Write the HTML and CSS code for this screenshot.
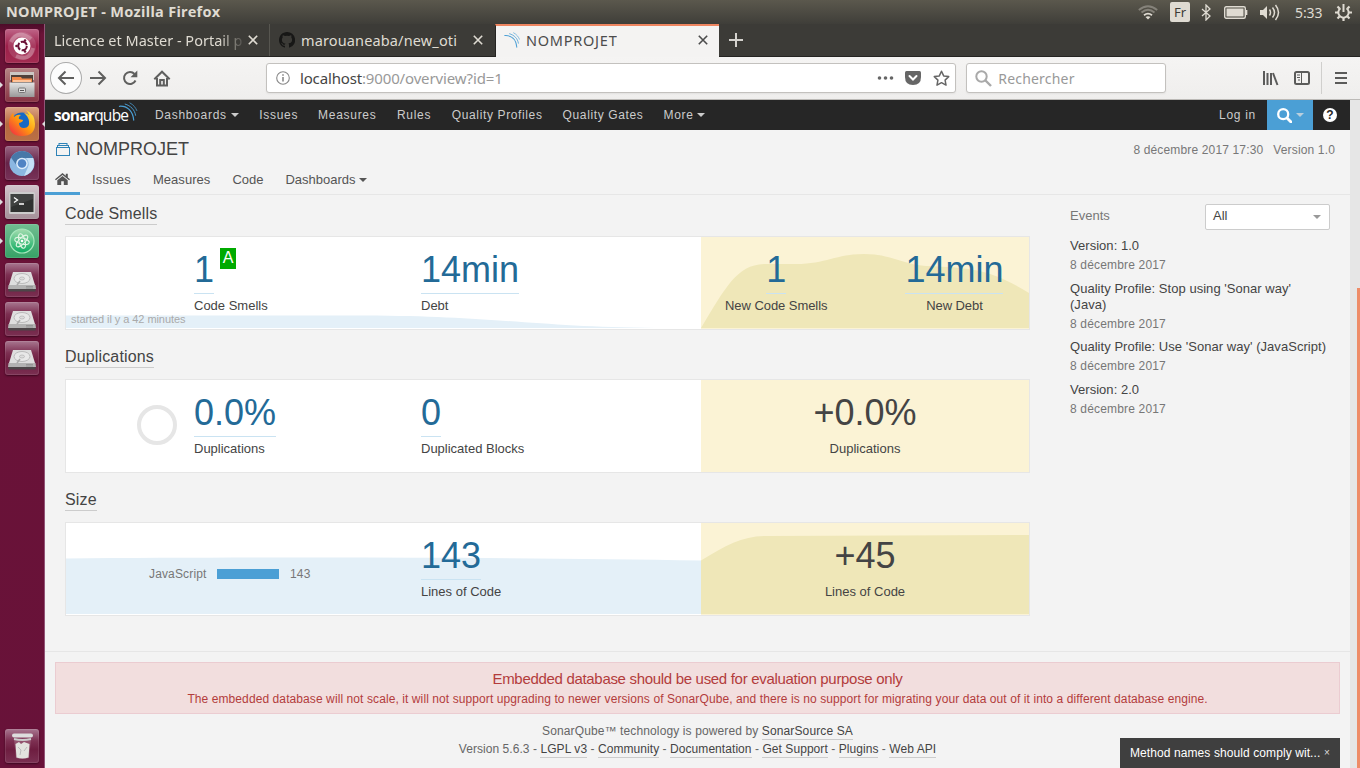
FILE: index.html
```html
<!DOCTYPE html>
<html lang="fr">
<head>
<meta charset="utf-8">
<title>NOMPROJET</title>
<link rel="stylesheet" href="styles.css">
</head>
<body>
<svg width="0" height="0" class="defs">
  <defs>
    <linearGradient id="metal" x1="0" y1="0" x2="0" y2="1"><stop offset="0" stop-color="#e4e4e4"/><stop offset="1" stop-color="#999"/></linearGradient>
    <linearGradient id="flame" x1="1" y1="0" x2="0" y2="1"><stop offset="0" stop-color="#fff04a"/><stop offset=".5" stop-color="#ff980e"/><stop offset="1" stop-color="#f0204a"/></linearGradient>
    <linearGradient id="atomfill" x1="0" y1="0" x2="0" y2="1"><stop offset="0" stop-color="#a5ddb0"/><stop offset="1" stop-color="#0cab60"/></linearGradient>
    <symbol id="disk" viewBox="0 0 34 34">
      <path d="M8 9h18l4 13v4H4v-4z" fill="#dedede"/><path d="M3.500 22h27l.5 4H3z" fill="#b2b2b2"/><path d="M3.500 26h27v2.500h-27z" fill="#4c4548"/>
      <ellipse cx="17" cy="15.500" rx="8" ry="5" fill="#e8e8e8" stroke="#bbb"/><ellipse cx="17" cy="15.500" rx="2.500" ry="1.500" fill="#ddd" stroke="#aaa" stroke-width=".6"/><path d="M12 22l3-4" stroke="#aaa" stroke-width="1.500"/><path d="M21 23.500h7M21 25h7" stroke="#888" stroke-width=".7"/>
    </symbol>
    <symbol id="waves" viewBox="0 0 20 20"><g fill="none" stroke="#4b9fd5" stroke-linecap="round"><path d="M1 4.500C9 4 15 9 16 19" stroke-width="1.300"/><path d="M7 2.200C13 4 17 8 18 14" stroke-width="1"/><path d="M12 1C16 3 18 6 19.300 9" stroke-width=".8"/></g></symbol>
    <symbol id="close" viewBox="0 0 10 10"><path d="M.8.8l8.400 8.400M9.200.8L.8 9.200" fill="none" stroke="currentColor" stroke-width="1.600"/></symbol>
  </defs>
</svg>

<header class="titlebar">
  <span class="window-title">NOMPROJET - Mozilla Firefox</span>
  <div class="indicators">
    <svg class="ind-wifi" width="20" height="15" viewBox="0 0 20 15" fill="none" stroke-width="1.800"><path d="M.8 5Q10-2.500 19.200 5" stroke="#85827a"/><path d="M3.500 7.500Q10 2 16.500 7.500" stroke="#85827a"/><path d="M6 10.300Q10 7 14 10.300" stroke="#dfdbd2"/><path d="M7.500 12L10 14.500 12.500 12Q10 10.500 7.500 12z" fill="#dfdbd2"/></svg>
    <span class="ind-lang">Fr</span>
    <svg class="ind-bt" width="10" height="17" viewBox="0 0 10 17" fill="none" stroke="#dfdbd2" stroke-width="1.300"><path d="M1 5l8 7-4 4V1l4 4-8 7"/></svg>
    <svg class="ind-bat" width="24" height="13" viewBox="0 0 24 13"><rect x=".7" y=".7" width="20.600" height="11.600" rx="1.500" fill="none" stroke="#dfdbd2" stroke-width="1.400"/><rect x="2.500" y="2.500" width="17" height="8" fill="#dfdbd2"/><path d="M22.500 4v5" stroke="#dfdbd2" stroke-width="1.700"/></svg>
    <svg class="ind-vol" width="20" height="17" viewBox="0 0 20 17"><path d="M0 6h3l4-4v13l-4-4H0z" fill="#dfdbd2"/><path d="M9.500 5.500q2 3 0 6M12.500 3.500q4 5 0 10M15.500 1q6 7.500 0 15" fill="none" stroke="#dfdbd2" stroke-width="1.500"/></svg>
    <span class="ind-time">5:33</span>
    <svg class="ind-gear" width="17" height="17" viewBox="0 0 17 17" fill="none" stroke="#dfdbd2"><path d="M5.500 4.200A5.200 5.200 0 1 0 11.500 4.200" stroke-width="2"/><path d="M8.500 0v8" stroke-width="2"/><path d="M0 8.500h3M14 8.500h3M8.500 14v3M2.500 2.500l2 2M14.500 2.500l-2 2M2.500 14.500l2-2M14.500 14.500l-2-2" stroke-width="2.200"/></svg>
  </div>
</header>

<div class="desktop">
  <aside class="launcher">
    <div class="tile ubuntu"><svg viewBox="0 0 34 34"><circle cx="17" cy="17" r="14" fill="#fff" opacity=".12"/><path d="M6 13q7-13 20-3M28 19q-3 14-17 8" stroke="#fff" stroke-opacity=".25" stroke-width="4" fill="none"/><circle cx="17" cy="17" r="8.500" fill="#fff"/><circle cx="17.500" cy="17" r="4.300" fill="none" stroke="#6b1237" stroke-width="2" stroke-dasharray="7.500 1.500"/><g fill="#6b1237"><circle cx="11.500" cy="17" r="1.300"/><circle cx="20" cy="11.500" r="1.300"/><circle cx="20" cy="22.500" r="1.300"/></g></svg></div>
    <div class="tile files running"><svg viewBox="0 0 34 34"><path d="M5 4h24v8H5z" fill="#ccc8c4"/><path d="M6 7h22v8H6z" fill="#50413a"/><path d="M7 9h9l1 1.500h10V14H7z" fill="#f28b4c"/><path d="M8 12h18v2H8z" fill="#ffc49a"/><path d="M4.500 14.500h25V29h-25z" fill="url(#metal)"/><rect x="13.500" y="20" width="7" height="4.500" rx="1" fill="#ddd" stroke="#777"/><path d="M15 22.500h4" stroke="#555"/></svg></div>
    <div class="tile firefox running focused"><svg viewBox="0 0 34 34"><circle cx="17" cy="16.500" r="11" fill="#1769c5"/><path d="M4 16Q4 10 8 6l1 4q3-3 7-2-3 2-2 4l4 1q0 2-4 3 0 5 5 5 6 0 5-7-1-5-5-8 3 0 5 2-1-3-3-5 9 4 9 14 0 12-13 12Q4 29 4 16z" fill="url(#flame)"/></svg></div>
    <div class="tile chromium"><svg viewBox="0 0 34 34"><circle cx="17" cy="17.500" r="12.500" fill="#8bb7e2"/><path d="M6 11.500Q10 5 17 5q8 0 11.200 7H17a5.500 5.500 0 0 0-5 8z" fill="#4778a8"/><path d="M28.200 12Q32 25 19 30l4-9q2-5-2-9z" fill="#c5e0f7"/><circle cx="17" cy="17.500" r="5.800" fill="#dcecfa"/><circle cx="17" cy="17.500" r="4.300" fill="#4f83c4"/></svg></div>
    <div class="tile terminal running"><svg viewBox="0 0 34 34"><rect x="4" y="7" width="26" height="22" rx="1.500" fill="#ccc"/><rect x="5.500" y="9" width="23" height="18" fill="#303231"/><path d="M6 9h22v5L6 22z" fill="#fff" opacity=".08"/><path d="M9 12.500l3.500 2.500L9 17.500M14 19h5" stroke="#fff" stroke-width="1.300" fill="none"/></svg></div>
    <div class="tile atom running"><svg viewBox="0 0 34 34"><circle cx="17" cy="17" r="12" fill="url(#atomfill)" stroke="#a6e8bd" stroke-width="1.200"/><g fill="none" stroke="#dff5e2" stroke-width="1"><ellipse cx="17" cy="17" rx="7.500" ry="3" transform="rotate(15 17 17)"/><ellipse cx="17" cy="17" rx="7.500" ry="3" transform="rotate(75 17 17)"/><ellipse cx="17" cy="17" rx="7.500" ry="3" transform="rotate(135 17 17)"/></g><circle cx="17" cy="17" r="1.300" fill="#fff"/></svg></div>
    <div class="tile"><svg><use href="#disk"/></svg></div>
    <div class="tile"><svg><use href="#disk"/></svg></div>
    <div class="tile"><svg><use href="#disk"/></svg></div>
    <div class="tile trash"><svg viewBox="0 0 34 34"><path d="M9 10h17l-2 19q-7 2-13 0z" fill="#fff" opacity=".18"/><path d="M10.500 15l3.500-2 2 2 3-2 5.500 2-1 13.500q-6 2-12 0z" fill="#e3e3df"/><path d="M13 18l3 3-1 5M22 18l-3 4" stroke="#bbb" fill="none"/><rect x="7" y="4.500" width="21" height="4" rx="2" fill="#ddd"/><path d="M9 10q8.500 2 17 0" stroke="#ccc" stroke-width="2" fill="none"/></svg></div>
  </aside>

  <div class="window">
    <div class="tabs">
      <div class="tab tab-a"><span class="tab-label faded">Licence et Master - Portail p</span><svg class="x"><use href="#close"/></svg></div>
      <div class="tab tab-b"><svg class="fav" viewBox="0 0 16 16"><path fill="#171716" d="M8 0C3.600 0 0 3.600 0 8c0 3.500 2.300 6.500 5.500 7.600.4.100.5-.2.500-.4v-1.500c-2.200.5-2.700-.9-2.700-.9-.4-.9-.9-1.200-.9-1.200-.7-.5.1-.5.1-.5.800.1 1.200.8 1.200.8.700 1.200 1.900.9 2.300.7.100-.5.300-.9.500-1.100-1.800-.2-3.600-.9-3.600-4 0-.9.300-1.600.8-2.100-.1-.2-.4-1 .1-2.100 0 0 .7-.2 2.200.8a7.500 7.500 0 0 1 4 0c1.500-1 2.200-.8 2.200-.8.400 1.100.2 1.900.1 2.100.5.600.8 1.300.8 2.200 0 3.100-1.900 3.700-3.700 3.900.3.300.6.800.6 1.500v2.200c0 .2.100.5.600.4A8 8 0 0 0 8 0z"/></svg><span class="tab-label">marouaneaba/new_oti</span><svg class="x"><use href="#close"/></svg></div>
      <div class="tab tab-c"><svg class="fav"><use href="#waves"/></svg><span class="tab-label">NOMPROJET</span><svg class="x"><use href="#close"/></svg></div>
      <svg class="newtab" viewBox="0 0 14 14"><path d="M7 0v14M0 7h14" stroke="#d5d3ce" stroke-width="2"/></svg>
    </div>

    <div class="toolbar">
      <span class="back"><svg width="18" height="16" viewBox="0 0 18 16"><path d="M17 8H2M8.500 1.500L2 8l6.500 6.500"/></svg></span>
      <svg class="tool forward" width="18" height="16" viewBox="0 0 18 16"><path d="M1 8h15M9.500 1.500L16 8l-6.500 6.500"/></svg>
      <svg class="tool reload" width="16" height="16" viewBox="0 0 16 16"><path d="M13.500 10.500A6 6 0 1 1 12.500 4"/><path d="M15.300.5v6.800H8.500z"/></svg>
      <svg class="tool home" width="18" height="17" viewBox="0 0 18 17"><path d="M1.300 9.200L9 1.700l7.700 7.500M4 8v7.500h10V8"/><path d="M7.200 15v-5h3.600v5"/></svg>
      <div class="urlbar">
        <svg class="info" width="14" height="14" viewBox="0 0 14 14"><circle cx="7" cy="7" r="6.300" fill="none" stroke="#888" stroke-width="1.100"/><path d="M7 6v4.500M7 3.200v1.600" stroke="#888" stroke-width="1.600"/></svg>
        <span class="url"><b>localhost</b>:9000/overview?id=1</span>
        <svg class="dots" width="17" height="4" viewBox="0 0 17 4" fill="#666"><circle cx="2.500" cy="2" r="1.800"/><circle cx="8.500" cy="2" r="1.800"/><circle cx="14.500" cy="2" r="1.800"/></svg>
        <svg class="pocket" width="16" height="14" viewBox="0 0 16 14"><path d="M1.500 0h13Q16 0 16 1.500V6q0 8-8 8T0 6V1.500Q0 0 1.500 0z" fill="#666"/><path d="M4.500 5L8 8.500 11.500 5" stroke="#fff" stroke-width="2" fill="none" stroke-linecap="round"/></svg>
        <svg class="star" width="17" height="16" viewBox="0 0 17 16"><path d="M8.500 1.300l2.200 4.600 5 .7-3.600 3.500.9 5-4.500-2.400L4 15.100l.9-5L1.300 6.600l5-.7z" fill="none" stroke="#666" stroke-width="1.500" stroke-linejoin="round"/></svg>
      </div>
      <div class="searchbar"><svg width="17" height="17" viewBox="0 0 17 17"><circle cx="6.500" cy="6.500" r="5.200" fill="none" stroke="#a9a9a9" stroke-width="2"/><path d="M10.500 10.500l5.500 5.500" stroke="#a9a9a9" stroke-width="2.400"/></svg><span>Rechercher</span></div>
      <svg class="library" width="16" height="15" viewBox="0 0 16 15"><path d="M1 0v14M4.500 2v12M8 2v12" stroke="#5b5b5a" stroke-width="2"/><path d="M10 2l4.500 12" stroke="#5b5b5a" stroke-width="2"/></svg>
      <svg class="sidebar" width="16" height="14" viewBox="0 0 16 14"><rect x="1" y="1" width="14" height="12" rx="1.500" fill="none" stroke="#5b5b5a" stroke-width="2"/><path d="M7.500 1v12M3 4h3M3 6.500h3M4 9h2" stroke="#5b5b5a"/></svg>
      <span class="rule"></span>
      <svg class="menu" width="12" height="12" viewBox="0 0 12 12"><path d="M0 1h12M0 6h12M0 11h12" stroke="#5b5b5a" stroke-width="2"/></svg>
    </div>

    <div class="viewport">
      <div class="page">
        <nav class="navbar">
          <div class="logo"><span><b>sonar</b>qube</span><svg width="20" height="19"><use href="#waves"/></svg></div>
          <a class="caret-after nav-dash">Dashboards</a><a>Issues</a><a class="nav-wide">Measures</a><a class="nav-wide">Rules</a><a class="nav-tight">Quality Profiles</a><a class="nav-tight">Quality Gates</a><a class="caret-after">More</a>
          <a class="login">Log in</a>
          <span class="nav-search"><svg width="15" height="15" viewBox="0 0 15 15" fill="none" stroke="#fff"><circle cx="6.200" cy="6.200" r="5" stroke-width="2.300"/><path d="M10 10l4 4" stroke-width="2.800" stroke-linecap="round"/></svg><i class="caret"></i></span>
          <span class="help">?</span>
        </nav>

        <header class="project">
          <div class="project-top">
            <svg width="14" height="13" viewBox="0 0 14 13" fill="none" stroke="#2f83b7"><rect x=".5" y="4.500" width="13" height="8"/><path d="M1.500 2.500h11M1.500 2v2.500M12.500 2v2.500M3 .5h8M3 0v2M11 0v2"/></svg>
            <h1>NOMPROJET</h1>
            <span class="meta">8 décembre 2017 17:30</span><span class="meta ver">Version 1.0</span>
          </div>
          <div class="project-tabs">
            <span class="active"><svg width="15" height="12" viewBox="0 0 15 12" fill="#555"><path d="M7.500 0L0 6.300l.9 1L7.500 1.900l6.600 5.400.9-1L12.800 4.400V.8h-2v1.900z"/><path d="M7.500 3L2.300 7.300V12H6.200V8.300h2.600V12h3.900V7.300z"/></svg></span>
            <a class="tab-issues">Issues</a><a class="tab-measures">Measures</a><a>Code</a><a class="caret-after">Dashboards</a>
          </div>
        </header>

        <div class="content">
          <main class="overview">
            <section>
              <h2>Code Smells</h2>
              <div class="card">
                <div class="main-part">
                  <svg class="chart" viewBox="0 0 635 92"><path d="M0 78.500H300C430 79 470 90 590 91H0z" fill="#e4f0f8"/></svg>
                  <div class="measure first"><span class="value link">1</span><span class="rating">A</span><span class="label">Code Smells</span></div>
                  <div class="measure second"><span class="value link">14min</span><span class="label">Debt</span></div>
                  <span class="started">started il y a 42 minutes</span>
                </div>
                <div class="leak pair">
                  <svg class="chart" viewBox="0 0 328 92"><path d="M0 91C25 50 36 27 65 27H95C125 27 135 17 163 17 190 17 200 27 225 29 275 31 290 33 328 56V91z" fill="#efe7b8"/></svg>
                  <div class="measure"><span class="value link">1</span><span class="label">New Code Smells</span></div>
                  <div class="measure"><span class="value link">14min</span><span class="label">New Debt</span></div>
                </div>
              </div>
            </section>
            <section>
              <h2>Duplications</h2>
              <div class="card">
                <div class="main-part">
                  <span class="donut"></span>
                  <div class="measure first"><span class="value link">0.0%</span><span class="label">Duplications</span></div>
                  <div class="measure second"><span class="value link">0</span><span class="label">Duplicated Blocks</span></div>
                </div>
                <div class="leak"><div class="measure"><span class="value">+0.0%</span><span class="label">Duplications</span></div></div>
              </div>
            </section>
            <section>
              <h2>Size</h2>
              <div class="card">
                <div class="main-part">
                  <svg class="chart" viewBox="0 0 635 92"><path d="M0 35.500C200 34 450 34 635 37.500V91H0z" fill="#e4f0f8"/></svg>
                  <div class="languages"><span class="lang">JavaScript</span><span class="bar"></span><span>143</span></div>
                  <div class="measure second"><span class="value link">143</span><span class="label">Lines of Code</span></div>
                </div>
                <div class="leak">
                  <svg class="chart" viewBox="0 0 328 92"><path d="M0 37.500C25 22 42 13 65 13L328 12V91H0z" fill="#efe7b8"/></svg>
                  <div class="measure"><span class="value">+45</span><span class="label">Lines of Code</span></div>
                </div>
              </div>
            </section>
          </main>

          <aside class="events">
            <div class="events-head"><span>Events</span><span class="select">All<i class="caret"></i></span></div>
            <div class="event"><p>Version: 1.0</p><time>8 décembre 2017</time></div>
            <div class="event"><p>Quality Profile: Stop using 'Sonar way'<br>(Java)</p><time>8 décembre 2017</time></div>
            <div class="event"><p>Quality Profile: Use 'Sonar way' (JavaScript)</p><time>8 décembre 2017</time></div>
            <div class="event"><p>Version: 2.0</p><time>8 décembre 2017</time></div>
          </aside>
        </div>

        <footer class="footer">
          <div class="alert"><p class="big">Embedded database should be used for evaluation purpose only</p><p class="small">The embedded database will not scale, it will not support upgrading to newer versions of SonarQube, and there is no support for migrating your data out of it into a different database engine.</p></div>
          <p class="credit powered">SonarQube™ technology is powered by <a>SonarSource SA</a></p>
          <p class="credit links">Version 5.6.3 - <a>LGPL v3</a> - <a>Community</a> - <a>Documentation</a> - <a>Get Support</a> - <a>Plugins</a> - <a>Web API</a></p>
        </footer>
        <div class="toast"><span>Method names should comply wit...</span><span class="toast-x">×</span></div>
      </div>
      <div class="scrollbar"><div class="thumb"></div></div>
    </div>
  </div>
</div>
</body>
</html>
```
FILE: styles.css
```css
* { box-sizing: border-box; }
body { margin: 0; width: 1360px; height: 768px; overflow: hidden; display: flex; flex-direction: column; font: 13px "Liberation Sans", Arial, sans-serif; color: #444; }
svg { display: block; flex: none; }
h1, h2, p { margin: 0; font-weight: 400; }
.defs { position: absolute; }

/* system bar */
.titlebar { height: 24px; flex: none; display: flex; justify-content: space-between; align-items: center; background: linear-gradient(#5b584d, #3f3e39); color: #dfdbd2; padding: 0 8px 0 6px; font-family: "Noto Sans", sans-serif; }
.window-title { font-weight: 700; font-size: 14.5px; letter-spacing: .33px; line-height: 20px; margin-top: -2px; }
.indicators { display: flex; align-items: center; }
.ind-lang { width: 20px; height: 20px; margin: 0 11px 0 12px; border-radius: 2px; background: #dfdbd2; color: #3c3b37; text-align: center; font-size: 13px; line-height: 21px; }
.ind-bat { margin-left: 13px; }
.ind-vol { margin: 0 15px 0 12px; }
.ind-time { font-size: 14px; width: 28px; white-space: nowrap; letter-spacing: -.1px; }
.ind-gear { margin-left: 12px; }

.desktop { flex: 1; display: flex; min-height: 0; }

/* launcher */
.launcher { width: 45px; padding: 5px 6px 5px 5px; display: flex; flex-direction: column; gap: 5px; background: linear-gradient(#4c0c29, #6b1237 10px, #681239); border-right: 1px solid #925477; }
.tile { position: relative; width: 34px; height: 34px; flex: none; border-radius: 3px; background: linear-gradient(#a87790, #7d3052 35%, #6e1d40 60%, #7a3052); box-shadow: inset 0 0 0 1px rgba(255,255,255,.1), 0 1px 2px #3d0820; }
.tile svg { width: 34px; height: 34px; }
.tile.ubuntu { background: linear-gradient(#bf6588, #9c1f49 50%, #a32c52); }
.tile.files { background: linear-gradient(#b68585, #873343); }
.tile.firefox { background: linear-gradient(#dda484, #b5683f 50%, #bb7045); }
.tile.chromium { background: linear-gradient(#9a6683, #662348 50%, #783258); }
.tile.terminal { background: linear-gradient(#d2c5cc, #a49099); }
.tile.atom { background: linear-gradient(#72bd92, #36a266); }
.tile.trash { margin-top: auto; }
.running::before { content: ""; position: absolute; left: -5px; top: 14px; border: 3px solid transparent; border-left-color: #ddd; border-right: 0; }
.focused::after { content: ""; position: absolute; right: -6px; top: 14px; border: 3px solid transparent; border-right-color: #ddd; border-left: 0; }

/* browser chrome */
.window { flex: 1; display: flex; flex-direction: column; min-width: 0; font-family: "Noto Sans", sans-serif; }
.tabs { height: 33px; flex: none; display: flex; background: #3c3b37; border-bottom: 1px solid #252422; color: #dfdbd2; }
.tab { display: flex; align-items: center; font-size: 14.5px; white-space: nowrap; }
.tab-a { width: 224px; padding: 0 11px 0 9px; }
.tab-b { width: 226px; padding: 0 12px 0 10px; border-left: 1px solid #575650; }
.tab-b .tab-label { letter-spacing: .14px; }
.tab-c { width: 224px; height: 33px; padding: 0 11px 3px 8px; background: #f4f3f2; color: #4c4c4c; border-top: 2px solid #ee8560; border-left: 1px solid #252422; }
.tab-c .tab-label { letter-spacing: .75px; }
.tab .fav { width: 16px; height: 16px; margin-right: 6px; }
.tab-b .fav { margin-left: -1px; }
.x { width: 10px; height: 10px; margin-left: auto; }
.tab-label { overflow: hidden; }
.faded { width: 188px; -webkit-mask: linear-gradient(90deg, #000 165px, rgba(0,0,0,.15) 188px); mask: linear-gradient(90deg, #000 165px, rgba(0,0,0,.15) 188px); }
.newtab { width: 14px; height: 14px; margin: 9px 0 0 10px; }
.toolbar { height: 43px; flex: none; display: flex; align-items: center; background: linear-gradient(#f5f4f3, #efeeed); border-bottom: 1px solid #bcbab7; padding: 0 13px 0 5px; }
.back { width: 32px; height: 32px; border: 1px solid #aaa; border-radius: 50%; background: #fcfcfc; display: flex; align-items: center; justify-content: center; }
.back path, .tool path { fill: none; stroke: #5f5f5e; stroke-width: 2; }
.tool.reload path:last-child { fill: #5f5f5e; stroke: none; }
.forward { margin-left: 7px; }
.reload { margin-left: 15px; }
.home { margin-left: 15px; }
.urlbar, .searchbar { height: 30px; background: #fff; border: 1px solid #c3c1be; border-radius: 3px; display: flex; align-items: center; font-size: 15px; color: #999; box-shadow: 0 1px 2px rgba(0,0,0,.06); }
.urlbar { width: 691px; margin-left: 95px; padding: 0 6px 0 9px; }
.url { margin-left: 10px; letter-spacing: -.15px; }
.url b { font-weight: 400; color: #444; }
.dots { margin-left: auto; }
.pocket { margin: 0 12px 0 11px; }
.star { margin-right: -1px; }
.searchbar { width: 200px; margin-left: 10px; padding-left: 8px; font-size: 14px; gap: 6px; letter-spacing: .2px; }
.library { margin-left: 97px; }
.sidebar { margin-left: 15px; }
.rule { width: 1px; height: 32px; background: #d0cfcd; margin: 0 13px 0 11px; }

/* page */
.viewport { flex: 1; display: flex; min-height: 0; font-family: "Liberation Sans", Arial, sans-serif; }
.page { position: relative; flex: 1; background: #f3f3f3; display: flex; flex-direction: column; min-width: 0; }
.scrollbar { width: 10px; background: #e6e6e6; padding: 188px 0 0 7px; }
.thumb { height: 100%; background: #ee8c68; }
.caret, .caret-after::after { content: ""; display: inline-block; border: 4px solid transparent; border-top-color: currentColor; border-bottom: 0; }
.caret-after::after { margin-left: 3px; vertical-align: 2px; }

.navbar { height: 30px; flex: none; display: flex; align-items: center; background: #262626; color: #ccc; font-size: 12px; letter-spacing: .7px; }
.navbar a { margin-right: 20px; white-space: nowrap; }
.navbar .nav-dash { margin-right: 20.500px; }
.navbar .nav-dash::after { margin-left: 4px; }
.navbar .nav-wide { margin-right: 20.600px; }
.navbar .nav-tight { letter-spacing: .63px; }
.logo { display: flex; width: 110px; padding-left: 9px; color: #fff; font: 15.5px/30px "Open Sans", sans-serif; letter-spacing: -.75px; }
.logo span { width: 64px; white-space: nowrap; }
.logo svg { margin-top: 2px; }
.navbar .login { margin-left: auto; margin-right: 11px; }
.nav-search { width: 46px; height: 30px; background: #4b9fd5; display: flex; align-items: center; justify-content: center; gap: 4px; }
.nav-search .caret { color: #b9cfdd; }
.help { width: 14px; height: 14px; border-radius: 50%; margin: 0 13px 0 10px; background: #fff; color: #262626; font: 700 12px/14px "Liberation Sans", sans-serif; text-align: center; letter-spacing: 0; }

.project { height: 65px; flex: none; border-bottom: 1px solid #e6e6e6; }
.project-top { display: flex; align-items: center; height: 39px; padding: 0 15px 0 11px; }
.project-top h1 { font-size: 18px; margin: 0 auto 0 6px; }
.meta { font-size: 12px; color: #777; letter-spacing: .15px; }
.ver { margin-left: 10px; }
.project-tabs { display: flex; height: 26px; align-items: center; gap: 22px; }
.project-tabs a { line-height: 22px; margin-bottom: 4px; white-space: nowrap; color: #555; }
.tab-issues { letter-spacing: .22px; }
.tab-measures { letter-spacing: .05px; }
.project-tabs .active { width: 35px; height: 26px; padding: 4px 0 0 10px; border-bottom: 3px solid #4b9fd5; margin-right: -10px; }

.content { height: 456px; flex: none; display: flex; padding-left: 20px; }
.overview { width: 965px; }
.overview section { height: 143px; padding-top: 8px; }
h2 { display: table; height: 22px; font-size: 16px; line-height: 21px; letter-spacing: .15px; border-bottom: 1px solid #ccc; margin-bottom: 11px; }
.card { height: 94px; border: 1px solid #e6e6e6; background: #fff; display: flex; }
.main-part { position: relative; width: 635px; display: grid; grid-template-columns: 72px 56px 227px 1fr; }
.leak { position: relative; flex: 1; display: flex; justify-content: center; background: #fbf3d5; }
.leak.pair { justify-content: flex-start; padding-left: 24px; gap: 78px; }
.leak.pair .label { letter-spacing: -.06px; }
.chart { position: absolute; left: 0; top: 0; width: 100%; height: 100%; }
.measure { position: relative; padding-top: 12px; white-space: nowrap; }
.leak .measure { text-align: center; }
.first { grid-column: 3; }
.second { grid-column: 4; }
.value { display: inline-block; height: 45px; font-size: 36px; line-height: 42px; border-bottom: 1px solid transparent; vertical-align: top; }
.value.link { color: #236a97; border-color: #cae3f2; }
.label { display: block; line-height: 18px; margin-top: 3px; }
.rating { display: inline-block; vertical-align: top; width: 16px; height: 21px; margin: -1px 0 0 6px; background: #0a0; color: #fff; font-size: 16px; line-height: 19px; text-align: center; }
.started { position: absolute; left: 5px; bottom: 3px; font-size: 11px; line-height: 13px; color: #aaa; letter-spacing: -.07px; }
.donut { grid-column: 2; align-self: start; width: 40px; height: 40px; border-radius: 50%; border: 4px solid #e6e6e6; margin: 25.400px 0 0 -.6px; }
.languages { position: relative; grid-column: 2 / 4; grid-row: 1; display: flex; align-items: center; height: 16px; margin-top: 43px; padding-left: 11px; font-size: 12px; color: #777; gap: 11px; letter-spacing: .15px; }
.lang { width: 57px; white-space: nowrap; }
.bar { width: 62px; height: 10px; background: #4b9fd5; }

.events { margin-left: 40px; width: 260px; padding-top: 9px; }
.events-head { display: flex; justify-content: space-between; color: #777; line-height: 24px; margin-bottom: 8px; }
.select { width: 125px; height: 26px; border: 1px solid #ccc; border-radius: 2px; background: #fff; color: #444; padding: 0 8px 2px 7px; display: flex; justify-content: space-between; align-items: center; }
.select .caret { color: #999; margin-top: 2px; }
.event { margin-bottom: 7.500px; white-space: nowrap; }
.event p { line-height: 16px; letter-spacing: .04px; }
.event time { display: block; font-size: 12px; line-height: 16px; margin-top: 3px; color: #777; letter-spacing: .17px; }

.footer { border-top: 1px solid #e6e6e6; padding: 10px; flex: 1; text-align: center; font-size: 12px; }
.alert { height: 52px; background: #f2dede; border: 1px solid #ebccd1; color: #b33c3c; white-space: nowrap; }
.alert .big { font-size: 15px; line-height: 20px; margin-top: 6px; letter-spacing: -.31px; }
.alert .small { line-height: 20px; letter-spacing: .09px; }
.credit { line-height: 16px; color: #666; height: 18px; letter-spacing: .12px; }
.powered { margin-top: 9px; }
.links { letter-spacing: .06px; }
.credit a { color: #444; display: inline-block; border-bottom: 1px solid #ccc; }
.toast { position: absolute; right: 10px; bottom: 0; width: 220px; height: 30px; background: #3f3f3f; color: #fff; font-size: 12px; line-height: 30px; padding: 0 10px; display: flex; justify-content: space-between; white-space: nowrap; letter-spacing: .09px; }
.toast-x { font-size: 10px; color: #ddd; }
```
